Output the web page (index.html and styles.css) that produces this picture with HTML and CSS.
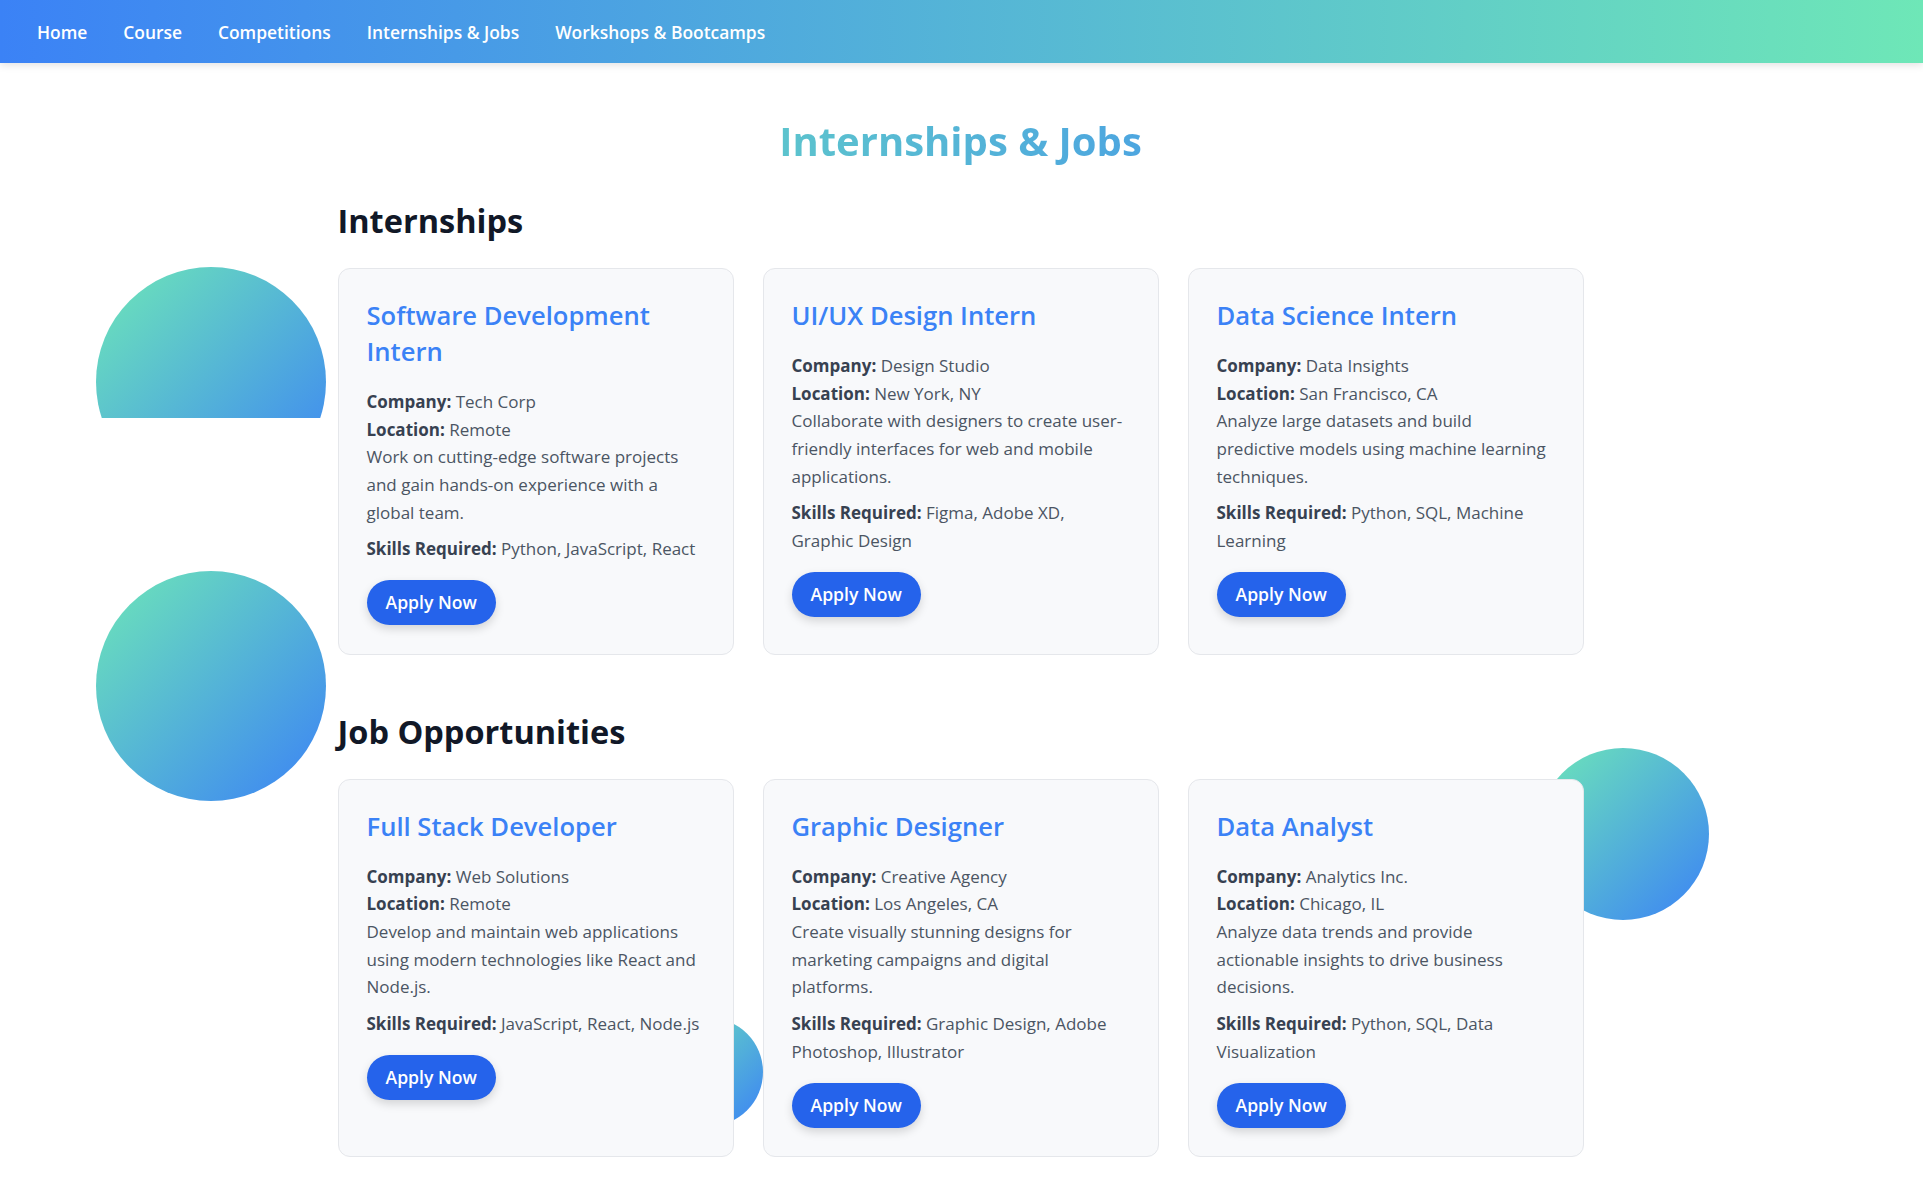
FILE: index.html
```html
<!DOCTYPE html>
<html lang="en">
<head>
<meta charset="utf-8">
<title>Internships &amp; Jobs</title>
<link rel="stylesheet" href="styles.css">
</head>
<body>
<nav class="topnav">
  <a href="#">Home</a>
  <a href="#">Course</a>
  <a href="#">Competitions</a>
  <a href="#">Internships &amp; Jobs</a>
  <a href="#">Workshops &amp; Bootcamps</a>
</nav>

<div class="shape-clip"><div class="shape shape-lg"></div></div>
<div class="shape shape-lg shape-b"></div>
<div class="shape shape-c"></div>
<div class="shape shape-d"></div>

<main class="page">
  <h1 class="page-title">Internships &amp; Jobs</h1>

  <section class="section">
    <h2 class="section-title">Internships</h2>
    <div class="card-grid">
      <article class="card">
        <h3 class="card-title">Software Development Intern</h3>
        <p class="line"><strong>Company:</strong> Tech Corp</p>
        <p class="line"><strong>Location:</strong> Remote</p>
        <p class="line">Work on cutting-edge software projects and gain hands-on experience with a global team.</p>
        <p class="line skills"><strong>Skills Required:</strong> Python, JavaScript, React</p>
        <a class="apply" href="#">Apply Now</a>
      </article>
      <article class="card">
        <h3 class="card-title">UI/UX Design Intern</h3>
        <p class="line"><strong>Company:</strong> Design Studio</p>
        <p class="line"><strong>Location:</strong> New York, NY</p>
        <p class="line">Collaborate with designers to create user-friendly interfaces for web and mobile applications.</p>
        <p class="line skills"><strong>Skills Required:</strong> Figma, Adobe XD, Graphic Design</p>
        <a class="apply" href="#">Apply Now</a>
      </article>
      <article class="card">
        <h3 class="card-title">Data Science Intern</h3>
        <p class="line"><strong>Company:</strong> Data Insights</p>
        <p class="line"><strong>Location:</strong> San Francisco, CA</p>
        <p class="line">Analyze large datasets and build predictive models using machine learning techniques.</p>
        <p class="line skills"><strong>Skills Required:</strong> Python, SQL, Machine Learning</p>
        <a class="apply" href="#">Apply Now</a>
      </article>
    </div>
  </section>

  <section class="section">
    <h2 class="section-title">Job Opportunities</h2>
    <div class="card-grid">
      <article class="card">
        <h3 class="card-title">Full Stack Developer</h3>
        <p class="line"><strong>Company:</strong> Web Solutions</p>
        <p class="line"><strong>Location:</strong> Remote</p>
        <p class="line">Develop and maintain web applications using modern technologies like React and Node.js.</p>
        <p class="line skills"><strong>Skills Required:</strong> JavaScript, React, Node.js</p>
        <a class="apply" href="#">Apply Now</a>
      </article>
      <article class="card">
        <h3 class="card-title">Graphic Designer</h3>
        <p class="line"><strong>Company:</strong> Creative Agency</p>
        <p class="line"><strong>Location:</strong> Los Angeles, CA</p>
        <p class="line">Create visually stunning designs for marketing campaigns and digital platforms.</p>
        <p class="line skills"><strong>Skills Required:</strong> Graphic Design, Adobe Photoshop, Illustrator</p>
        <a class="apply" href="#">Apply Now</a>
      </article>
      <article class="card">
        <h3 class="card-title">Data Analyst</h3>
        <p class="line"><strong>Company:</strong> Analytics Inc.</p>
        <p class="line"><strong>Location:</strong> Chicago, IL</p>
        <p class="line">Analyze data trends and provide actionable insights to drive business decisions.</p>
        <p class="line skills"><strong>Skills Required:</strong> Python, SQL, Data Visualization</p>
        <a class="apply" href="#">Apply Now</a>
      </article>
    </div>
  </section>
</main>
</body>
</html>
```

FILE: styles.css
```css
html, body {
  margin: 0;
  padding: 0;
  background: #ffffff;
}

body {
  position: relative;
  font-family: "Open Sans", "Noto Sans", sans-serif;
  color: #4b5563;
  min-height: 1193px;
}

.topnav {
  display: flex;
  align-items: center;
  gap: 36px;
  height: 63px;
  padding: 0 0 0 37px;
  background: linear-gradient(90deg, #3b82f6, #6ee7b7);
  box-shadow: 0 2px 8px rgba(0, 0, 0, 0.12);
  position: relative;
  z-index: 3;
}

.topnav a {
  color: #ffffff;
  text-decoration: none;
  font-size: 17.4px;
  font-weight: 600;
}

.shape {
  position: absolute;
  border-radius: 50%;
  background: linear-gradient(135deg, #6ee7b7, #3b82f6);
  z-index: 0;
}

.shape-lg {
  width: 230px;
  height: 230px;
}

.shape-clip {
  position: absolute;
  left: 96px;
  top: 267px;
  width: 230px;
  height: 151px;
  overflow: hidden;
  z-index: 0;
}

.shape-clip .shape {
  left: 0;
  top: 0;
}

.shape-b {
  left: 96px;
  top: 571px;
}

.shape-c {
  left: 1537px;
  top: 748px;
  width: 172px;
  height: 172px;
}

.shape-d {
  left: 655px;
  top: 1018px;
  width: 108px;
  height: 108px;
}

.page {
  position: relative;
  z-index: 1;
  width: 1246px;
  margin: 0 0 0 calc(50% - 624px);
  padding: 54px 0 0;
}

.page-title {
  margin: 0 0 35px;
  text-align: center;
  font-size: 40px;
  line-height: 48px;
  font-weight: 700;
  background: linear-gradient(90deg, #6ee7b7, #3b82f6);
  -webkit-background-clip: text;
  background-clip: text;
  color: transparent;
}

.section {
  margin: 0 0 56px;
}

.section-title {
  margin: 0 0 27px;
  font-size: 32.5px;
  line-height: 41px;
  font-weight: 700;
  color: #111827;
}

.card-grid {
  display: grid;
  grid-template-columns: repeat(3, 1fr);
  gap: 29px;
}

.card {
  background: #f8f9fb;
  border: 1px solid #e5e7eb;
  border-radius: 12px;
  padding: 28.8px 28.8px 28.8px 28px;
}

.card-title {
  margin: 0 0 18px;
  font-size: 25.6px;
  line-height: 36px;
  font-weight: 600;
  color: #3b82f6;
}

.line {
  margin: 0;
  font-size: 17px;
  line-height: 27.7px;
  color: #4b5563;
}

.line strong {
  color: #374151;
  font-weight: 700;
}

.skills {
  margin-top: 9px;
}

.apply {
  display: inline-block;
  margin-top: 17px;
  padding: 10px 19px;
  line-height: 25px;
  font-size: 17.6px;
  font-weight: 600;
  color: #ffffff;
  background: #2563eb;
  border-radius: 999px;
  text-decoration: none;
  box-shadow: 0 4px 10px rgba(0, 0, 0, 0.15);
}
```
